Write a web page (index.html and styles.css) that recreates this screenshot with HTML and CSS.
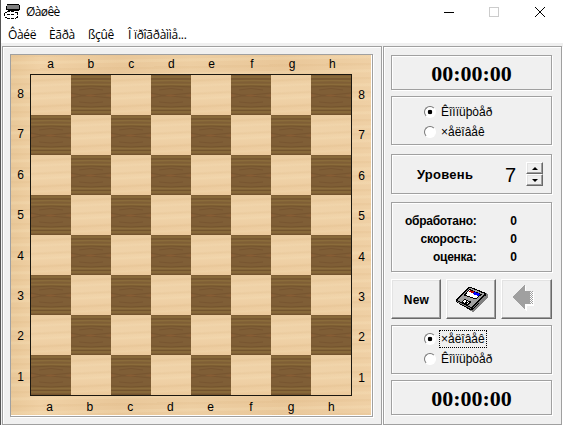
FILE: index.html
```html
<!DOCTYPE html>
<html lang="ru">
<head>
<meta charset="utf-8">
<title>Øàøêè</title>
<link rel="stylesheet" href="styles.css">
</head>
<body>
<div class="window">
  <header class="titlebar">
    <svg class="app-icon" width="17" height="16" viewBox="0 0 17 16" shape-rendering="crispEdges">
      <path d="M3 0h12v1h1v5h-1v1H4V6H2V2h1z" fill="#000"/>
      <path d="M3 1h12v4H3z" fill="#808080"/>
      <path d="M2 8h10v1h2v4h-2v2H2v-1H1V9h1z" fill="#fff"/>
      <path d="M3 7.500h8M1 8.500h2M11 8.500h2M3 10.500h8M1 13.500h2M3 14.500h9M12 13.500h2M13.500 8v5M.5 9v4" fill="none" stroke="#000" stroke-dasharray="3 1"/>
    </svg>
    <h1 class="title">Øàøêè</h1>
    <svg class="win-controls" width="104" height="12" viewBox="0 0 104 12">
      <path d="M0 6.500h10" stroke="#000"/>
      <rect x="45.500" y="1.500" width="9" height="9" fill="none" stroke="#ccc"/>
      <path d="M91 1l10 10M101 1l-10 10" stroke="#000"/>
    </svg>
  </header>
  <nav class="menu">
    <span class="m1">Ôàéë</span><span class="m2">Èãðà</span><span class="m3">ßçûê</span><span class="m4">Î ïðîãðàììå...</span>
  </nav>
  <main class="content">
    <section class="etched board-panel">
      <div class="board">
        <div class="files top"><span>a</span><span>b</span><span>c</span><span>d</span><span>e</span><span>f</span><span>g</span><span>h</span></div>
        <div class="middle">
          <div class="ranks left"><span>8</span><span>7</span><span>6</span><span>5</span><span>4</span><span>3</span><span>2</span><span>1</span></div>
          <div class="squares" id="squares"></div>
          <div class="ranks right"><span>8</span><span>7</span><span>6</span><span>5</span><span>4</span><span>3</span><span>2</span><span>1</span></div>
        </div>
        <div class="files bottom"><span>a</span><span>b</span><span>c</span><span>d</span><span>e</span><span>f</span><span>g</span><span>h</span></div>
      </div>
    </section>
    <section class="etched side">
      <div class="etched clock">00:00:00</div>
      <div class="etched players upper">
        <label><i class="radio on"></i><span>Êîìïüþòåð</span></label>
        <label><i class="radio"></i><span>×åëîâåê</span></label>
      </div>
      <div class="etched level">
        <b>Уровень</b><span class="value">7</span>
        <div class="spin"><i class="up"></i><i class="down"></i></div>
      </div>
      <dl class="etched stats">
        <dt>обработано:</dt><dd>0</dd>
        <dt>скорость:</dt><dd>0</dd>
        <dt>оценка:</dt><dd>0</dd>
      </dl>
      <div class="buttons">
        <button>New</button>
        <button>
          <svg class="disk" width="32" height="25" viewBox="0 0 32 25" shape-rendering="crispEdges">
            <path d="M15 1L32 7v3L18 25l-4-1z" fill="#808080"/>
            <path d="M13 0h2l15 6v2L17 23h-3L0 15v-3z" fill="#000"/>
            <path d="M13 1h2l14 6L15 20 1 13z" fill="#a0a0a0"/>
            <path d="M1 14l14 7v1L1 15zM16 21L29 8v1L17 22z" fill="#fff" opacity=".5"/>
            <path d="M13.500 2.500l11.500 5-5 4.500-11.500-4z" fill="#fff" stroke="#000"/>
            <path d="M14 3l4 1.500-1 2-4-2z" fill="#b00000"/>
            <path d="M18 4.500l6 2.500-2 2-5-2z" fill="#00f"/>
            <path d="M8.500 12.500l6 2.500-3 3-5.500-3z" fill="#fff" stroke="#000"/>
            <path d="M10 14l2 1-2 2-2-1z" fill="#000"/>
          </svg>
        </button>
        <button>
          <svg class="back" width="24" height="28" viewBox="0 0 24 28" shape-rendering="crispEdges">
            <path d="M1 14L14 1v7h8v14h-7v5h-1z" fill="#fff"/>
            <path d="M0 13L13 0v7h5v13h-5v6z" fill="#a0a0a0"/>
            <path d="M18.500 7v13M20.500 7v13" stroke="#a0a0a0" stroke-dasharray="1 1"/>
            <path d="M19.500 8v12" stroke="#a0a0a0" stroke-dasharray="1 1"/>
          </svg>
        </button>
      </div>
      <div class="etched players lower">
        <label><i class="radio on"></i><span class="focus">×åëîâåê</span></label>
        <label><i class="radio"></i><span>Êîìïüþòåð</span></label>
      </div>
      <div class="etched clock last">00:00:00</div>
    </section>
  </main>
</div>
<script src="board.js"></script>
</body>
</html>
```
FILE: styles.css
```css
* { box-sizing: border-box; }
body { margin: 0; background: #fff; overflow: hidden; font-family: "Liberation Sans", sans-serif; color: #000; }
.window { width: 563px; height: 425px; border-left: 1px solid #555; }
.titlebar { height: 24px; display: flex; align-items: flex-start; padding: 4px 15px 0 3px; }
.title { margin: -1px 0 0 5px; font: 12px/18px "Open Sans", sans-serif; letter-spacing: -.6px; flex: 1; }
.win-controls { margin: 2px 0 0; }
.app-icon { display: block; }
.menu { height: 19px; display: flex; padding-left: 7px; font: 12px/21px "Open Sans", sans-serif; letter-spacing: -.35px; white-space: nowrap; }
.m1 { width: 41px; } .m2 { width: 39px; } .m3 { width: 40px; } .m4 { letter-spacing: -.28px; }
.content { height: 382px; background: #f0f0f0; padding: 3px 0 0 1px; display: flex; gap: 1px; }
.etched { border: 1px solid #a0a0a0; box-shadow: 1px 1px 0 #fff, inset 1px 1px 0 #fff; }
.board-panel { width: 380px; height: 379px; padding: 7px; }
.board {
  width: 363px; height: 363px; border: 1px solid #a0a0a0; box-shadow: 1px 1px 0 #fff, inset -1px -1px 0 #fff;
  padding: 0 1px 1px 0; font-size: 12px; line-height: 18px;
  background: repeating-linear-gradient(179deg, #d6ac7622 0 2px, transparent 3px 6px, #fff0cc2a 7px 9px, transparent 10px 14px), linear-gradient(90deg, #e9c899, #f0d1a5 8%, #e9c799 30%, #edcea2 50%, #e9c799 75%, #efd0a5) content-box;
}
.files { height: 19px; display: grid; grid-template-columns: repeat(8, 40.250px); padding-left: 19.500px; text-align: center; }
.middle { display: flex; height: 322px; }
.ranks { display: grid; grid-template-rows: repeat(8, 40.400px); width: 19px; line-height: 40px; text-align: center; }
.ranks.left { padding-left: 0; }
.ranks.right { line-height: 42px; }
.files.bottom { line-height: 22px; padding-left: 18.500px; }
.squares { width: 322px; height: 322px; border: 1px solid #1c1810; display: grid; grid-template-columns: repeat(8, 40px); grid-template-rows: repeat(8, 40px); }
.light { background: repeating-linear-gradient(177deg, transparent 0 4px, #d3aa742e 6px, transparent 8px 9px, #fff1cf22 11px, transparent 13px), linear-gradient(#edcea2, #f0d3a9 50%, #ecca9c); }
.dark { display: block; width: 40px; height: 40px; }
.side { width: 179px; height: 379px; padding: 8px 7px 0; }
.clock { width: 161px; height: 35px; font: bold 22px/35px "Liberation Serif", serif; text-align: center; }
.players { width: 161px; height: 49px; margin-top: 6px; padding: 5px 0 0 32px; font-size: 12px; }
.players label { display: flex; height: 20px; align-items: center; gap: 5px; }
.radio { width: 12px; height: 12px; border-radius: 50%; border: 1px solid; border-color: #777 #fff #fff #777; background: #fff; display: block; }
.radio.on { background: radial-gradient(circle, #000 0 2px, #fff 2.600px); }
.focus { outline: 1px dotted #000; outline-offset: 1px; }
.level { width: 161px; height: 40px; margin-top: 9px; display: flex; align-items: center; font-size: 13px; padding-left: 25px; }
.level b { width: 57px; letter-spacing: .25px; }
.value { font-size: 20px; width: 12px; margin-left: 31px; padding-top: 2px; }
.spin { margin-left: 9px; width: 17px; height: 24px; display: grid; grid-template-rows: 12px 12px; }
.spin i, button { background: #f0f0f0; border: 1px solid; border-color: #fff #696969 #696969 #fff; box-shadow: inset -1px -1px 0 #a0a0a0, inset 1px 1px 0 #e3e3e3; }
.spin i { display: flex; align-items: center; justify-content: center; }
.spin i::before { content: ""; border: 3px solid transparent; border-top-width: 0; border-bottom: 3px solid #000; }
.spin .down::before { transform: rotate(180deg); }
.stats { width: 161px; height: 70px; margin: 8px 0 0; padding: 9px 0 0; font-weight: bold; font-size: 12px; line-height: 18px; display: grid; grid-template-columns: 84.500px 40.500px; grid-auto-rows: 18px; text-align: right; }
.stats dt { letter-spacing: -.25px; }
.stats dd { margin: 0; }
.buttons { display: grid; grid-template-columns: 50px 50px 51px; column-gap: 5px; margin-top: 7px; height: 40px; width: 162px; }
button { padding: 0; font: bold 12px "Liberation Sans", sans-serif; color: #000; display: flex; align-items: center; justify-content: center; }
button:first-child { padding: 2px 0 0 1px; letter-spacing: .2px; }
.disk { margin: 0 0 0 1px; }
.back { margin: -3px 6px 0 0; }
.lower { margin-top: 6px; padding-top: 3px; }
.last { margin-top: 6px; }
```
FILE: board.js
```javascript
const squares = document.getElementById('squares');
const wood = `<svg class="dark" viewBox="0 0 40 40">
<rect width="40" height="40" fill="#7f5e36"/>
<path d="M0 2h40M0 6q20-1 40 0M0 9.500h40M0 33.500h40M0 37h40" stroke="#92763f" stroke-width="1.500" opacity=".6" fill="none"/>
<path d="M0 4h40M0 12q20-2 40 0M0 31q20 2 40 0M0 35.500h40M0 39.500h40" stroke="#6b4c28" opacity=".55" fill="none"/>
<path d="M0 18q10 3 20 2t20-2M0 23q10-3 20-2t20 2M8 15q12-3 24 0M8 27q12 2 24 0" stroke="#704c2b" opacity=".5" fill="none"/>
<path d="M14 20.500q6-2 12 0q-6 2-12 0M0 19l6 1.500-6 1.500M40 19l-6 1.500 6 1.500" fill="#8d5f36" opacity=".7"/></svg>`;
for (let i = 0; i < 64; i++) {
  const isDark = ((i >> 3) + i) % 2 === 1;
  squares.insertAdjacentHTML('beforeend', isDark ? wood : '<div class="light"></div>');
}
```
